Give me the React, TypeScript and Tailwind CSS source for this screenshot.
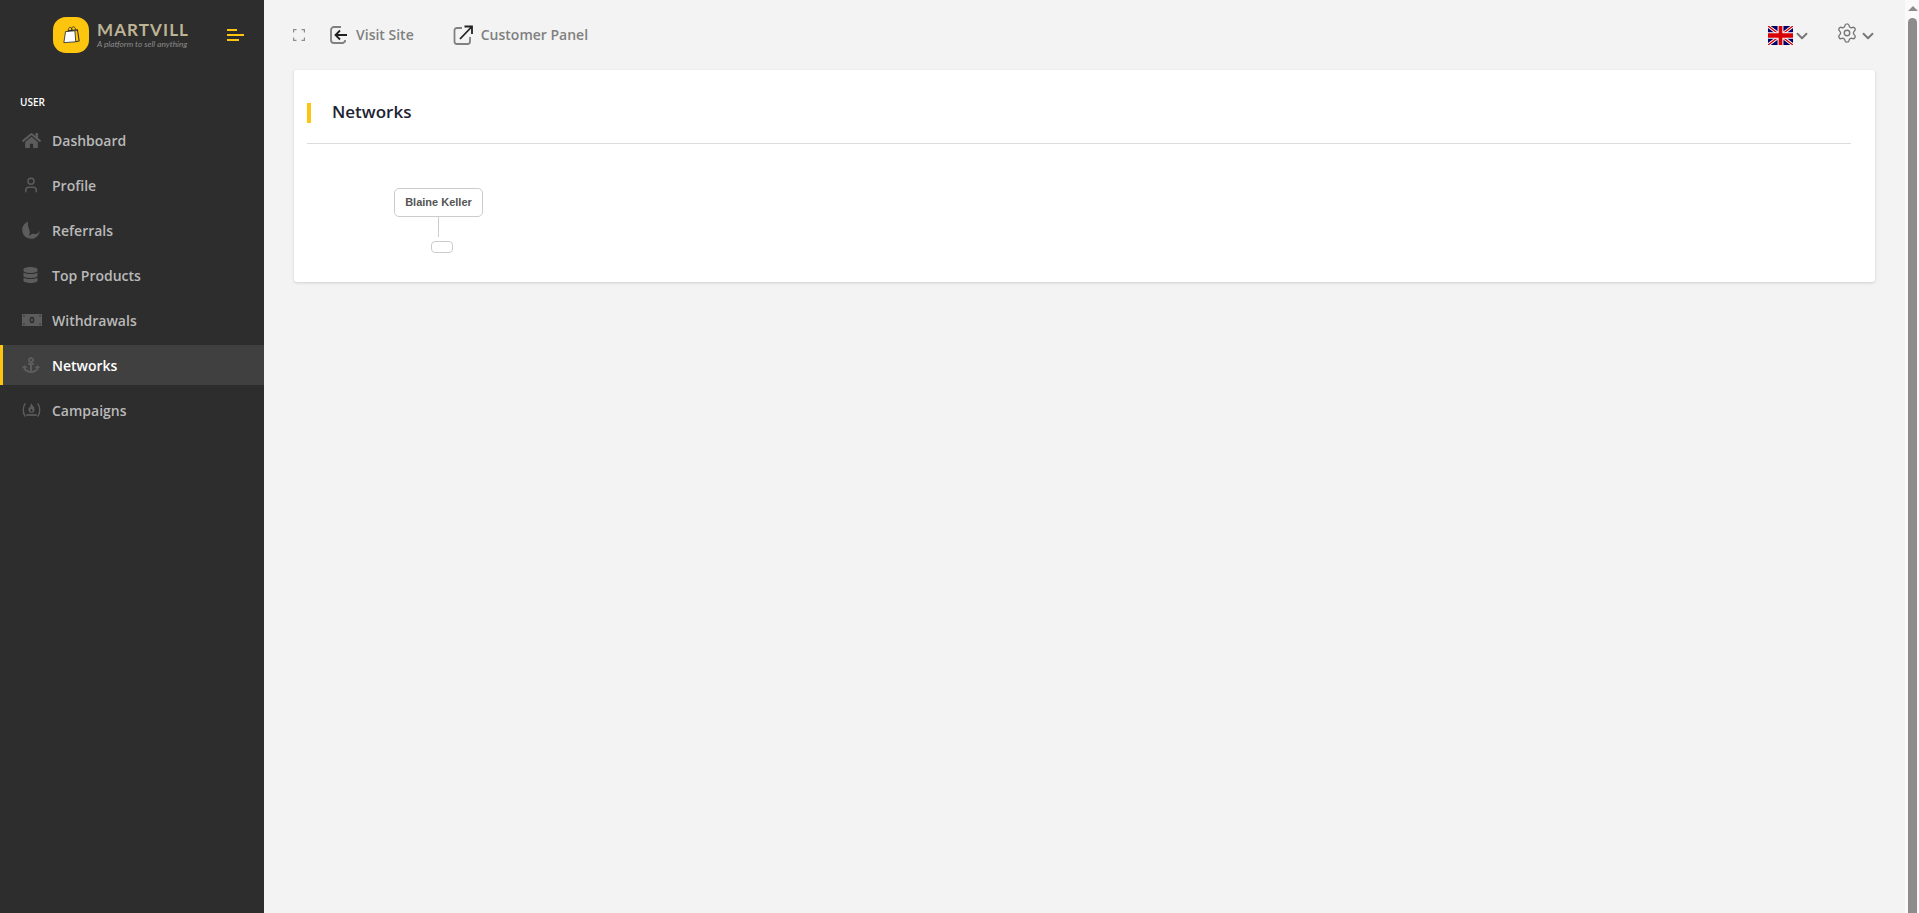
import { ChevronDown, Settings, User } from "lucide-react";
import { FaAnchor, FaDatabase, FaHome } from "react-icons/fa";

const font = "font-['Open_Sans',sans-serif]";

const links = [
  { label: "Dashboard", icon: <FaHome className="w-[19px] h-[19px]" /> },
  { label: "Profile", icon: <User className="w-[18px] h-[18px]" strokeWidth={2} /> },
  { label: "Referrals", icon: <MoonIcon /> },
  { label: "Top Products", icon: <FaDatabase className="w-[15px] h-[16px] ml-[1px]" /> },
  { label: "Withdrawals", icon: <BillIcon /> },
  { label: "Networks", icon: <FaAnchor className="w-[18px] h-[18px]" />, active: true },
  { label: "Campaigns", icon: <CampaignIcon /> },
];

function MoonIcon() {
  return (
    <svg viewBox="0 0 18 18" className="w-[18px] h-[18px]" fill="currentColor">
      <path d="M6 .8C2.600 2 .2 5.200.2 9c0 4.800 3.900 8.800 8.800 8.800 4.600 0 8.400-3.500 8.800-8.100-1.200 2.300-3.100 3.600-5.200 3.400-1.400-.1-2.300-.7-3.100.1-.8.8-1.600 1.300-2.700 1.300.7-.8 1.100-1.900 1.100-3C7.900 8.700 5.300 5.300 6 .8z" />
    </svg>
  );
}

function BillIcon() {
  return (
    <svg viewBox="0 0 20 12" className="w-5 h-3" fill="currentColor">
      <path
        fillRule="evenodd"
        d="M0 0h20v12H0zM10 2.800a2.300 3.200 0 1 0 0 6.400 2.300 3.200 0 0 0 0-6.400zM10 4.300a.9 1.700 0 1 1 0 3.400.9 1.700 0 0 1 0-3.400zM2 1.300a.7.7 0 1 0 0 1.400.7.7 0 0 0 0-1.400zM18 1.300a.7.7 0 1 0 0 1.400.7.7 0 0 0 0-1.400zM2 9.300a.7.7 0 1 0 0 1.400.7.7 0 0 0 0-1.400zM18 9.300a.7.7 0 1 0 0 1.400.7.7 0 0 0 0-1.400z"
      />
    </svg>
  );
}

function CampaignIcon() {
  return (
    <svg viewBox="0 0 20 16" className="w-[19px] h-[16px]" fill="none" stroke="currentColor">
      <path d="M3.500 1C.6 5 .6 11 3.500 15M16.500 1C19.400 5 19.400 11 16.500 15" strokeWidth="1.500" />
      <path
        fillRule="evenodd"
        d="M10 1c.4 2.300 3.200 3.500 3.200 6.700 0 1.900-1.400 3.300-3.200 3.300s-3.200-1.400-3.200-3.300c0-1.400.7-2.400 1.400-3 .2.800.5 1.200 1 1.300C8 4.300 9.200 2.500 10 1zM10 6.500c-.2.900-1.200 1.300-1.200 2.300 0 .6.500 1 1.200 1s1.200-.4 1.200-1c0-1-1-1.400-1.200-2.300z"
        fill="currentColor"
        stroke="none"
      />
      <path d="M4.500 13.300h11" strokeWidth="1.800" />
    </svg>
  );
}

function BagLogo() {
  return (
    <div className="w-9 h-9 rounded-[13px] bg-[#fec50f] flex items-center justify-center">
      <svg viewBox="0 0 20 22" className="w-[17px] h-[20px]">
        <path d="M6 6 L17 5 L19 18 L15 19" fill="none" stroke="#2d2d2d" strokeWidth="1.200" />
        <path d="M3 7 L14 6 L15 19 L1 20 Z" fill="#fff" stroke="#2d2d2d" strokeWidth="1" />
        <path d="M6 7 C6 1 10 0 11 6 M10 5 C10 0 14 0 15 5" fill="none" stroke="#2d2d2d" strokeWidth="1" />
      </svg>
    </div>
  );
}

function Sidebar() {
  return (
    <aside className="w-[264px] shrink-0 bg-[#2d2d2d] min-h-[913px]">
      <div className="h-[70px] flex items-center pl-[53px]">
        <BagLogo />
        <div className="ml-[8px] w-[91px] flex flex-col">
          <span className="text-[17px] leading-[18px] font-bold tracking-[1.100px] text-[#bdb395] font-['Lato',sans-serif] whitespace-nowrap">MARTVILL</span>
          <span className="text-[8.300px] leading-[10px] italic text-[#8a8a8a] font-['Lato',sans-serif] whitespace-nowrap">A platform to sell anything</span>
        </div>
        <div className="ml-[39px] flex flex-col gap-[3px] items-start">
          <span className="block w-[10px] h-[2px] bg-[#fec50f]" />
          <span className="block w-[17px] h-[2px] bg-[#fec50f]" />
          <span className="block w-[12px] h-[2px] bg-[#fec50f]" />
        </div>
      </div>
      <div className="pt-[25px] pl-5 pb-[11px] text-[10px] leading-[14px] font-semibold text-white">USER</div>
      <nav className="flex flex-col gap-[5px]">
        {links.map((link) => (
          <div
            key={link.label}
            className={`h-10 flex items-center border-l-[3px] pl-[19px] text-[14px] font-semibold ${
              link.active ? "border-[#fec50f] bg-[#404040] text-white" : "border-transparent text-[#b9b9b9]"
            }`}
          >
            <span className="w-[30px] flex items-center text-[#5c5c5c]">{link.icon}</span>
            {link.label}
          </div>
        ))}
      </nav>
    </aside>
  );
}

function TopBar() {
  return (
    <header className="h-[70px] flex items-center text-[#808080] text-[14px] font-semibold">
      <svg viewBox="0 0 12 12" className="w-3 h-3 ml-[-1px]" fill="none" stroke="#8d8d8d" strokeWidth="1.200">
        <path d="M.6 3.500V.6h2.900M8.500.6h2.900v2.900M11.400 8.500v2.900H8.500M3.500 11.400H.6V8.500" />
      </svg>
      <svg viewBox="0 0 20 20" className="w-5 h-5 ml-[24px] -mt-[1px]" fill="none" strokeWidth="1.800">
        <path d="M12 2H5a3 3 0 0 0-3 3v10a3 3 0 0 0 3 3h9l2-1.500V15" stroke="#808080" />
        <path d="M18 10H7M11 5.500 6.500 10l4.500 4.500" stroke="#222" />
      </svg>
      <span className="ml-[7px] -mt-[2px]">Visit Site</span>
      <svg viewBox="0 0 20 20" className="w-5 h-5 ml-[39px] -mt-[1px]" fill="none" strokeWidth="1.800">
        <path d="M9 3H4a2.500 2.500 0 0 0-2.500 2.500v11A2.500 2.500 0 0 0 4 19h10.500a2.500 2.500 0 0 0 2.500-2.500V12" stroke="#808080" />
        <path d="M7 14 18.500 2M11.500 1.500h7.500V9" stroke="#222" />
      </svg>
      <span className="ml-[8px] -mt-[2px]">Customer Panel</span>
      <div className="ml-auto mr-[-2px] flex items-center">
        <svg viewBox="0 0 60 40" preserveAspectRatio="none" className="w-[25px] h-[19px]">
          <rect width="60" height="40" fill="#00006b" />
          <path d="M0 0 60 40M60 0 0 40" stroke="#fff" strokeWidth="7" />
          <path d="M0 0 60 40M60 0 0 40" stroke="#d80000" strokeWidth="3" />
          <path d="M30 0V40M0 20H60" stroke="#fff" strokeWidth="14" />
          <path d="M30 0V40M0 20H60" stroke="#d80000" strokeWidth="9" />
        </svg>
        <ChevronDown className="w-[18px] h-[18px] mt-[1px] text-[#777]" strokeWidth={2.500} />
        <Settings className="w-[22px] h-[22px] ml-[25px] -mt-[5px] text-[#777]" strokeWidth={1.500} />
        <ChevronDown className="w-[18px] h-[18px] ml-[1px] mt-[1px] text-[#777]" strokeWidth={2.500} />
      </div>
    </header>
  );
}

function NetworkCard() {
  return (
    <section className="bg-white rounded-[3px] shadow-[0_1px_3px_rgba(0,0,0,0.15)] h-[212px] pl-[13px] pr-[24px]">
      <div className="h-[74px] pt-[10px] flex items-center border-b border-[#dcdcdc]">
        <span className="w-1 h-5 mt-[2px] bg-[#fec50f]" />
        <h2 className="ml-[21px] text-[17px] font-semibold text-[#1d2433]">Networks</h2>
      </div>
      <div className="pl-[87px] pt-[44px] w-fit flex flex-col">
        <div className="w-[89px] h-[29px] flex items-center justify-center border border-[#ccc] rounded-[5px] font-['Liberation_Sans',sans-serif] text-[11px] font-bold text-[#555]">
          Blaine Keller
        </div>
        <div className="w-px h-5 bg-[#ccc] ml-[44px]" />
        <div className="w-[22px] h-3 mt-1 ml-[37px] border border-[#ccc] rounded-[4px]" />
      </div>
    </section>
  );
}

export default function App() {
  return (
    <div className={`flex h-[913px] overflow-hidden bg-[#f3f3f3] ${font}`}>
      <Sidebar />
      <main className="flex-1 px-[30px]">
        <TopBar />
        <NetworkCard />
      </main>
      {/* the window's own scrollbar */}
      <div className="w-[14px] shrink-0 bg-[#fafafa] flex flex-col pl-[3px] pr-[2px]">
        <span className="mt-[6px] self-center border-x-[5px] border-x-transparent border-b-[5px] border-b-[#8c8c8c]" />
        <span className="mt-[7px] flex-1 rounded-t-full bg-[#8c8c8c]" />
      </div>
    </div>
  );
}
